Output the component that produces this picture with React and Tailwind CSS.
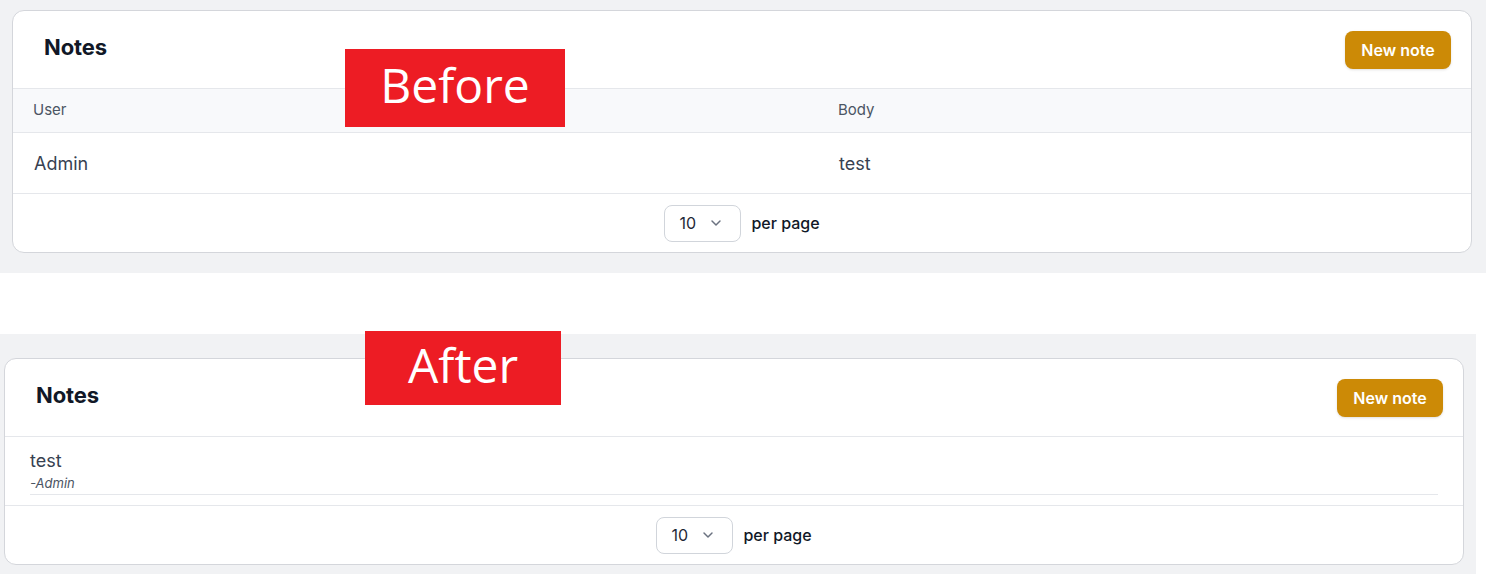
import { ChevronDown } from "lucide-react";

const font = { fontFamily: "Inter, 'Noto Sans', sans-serif" };

function Header() {
  return (
    <div className="flex h-[78px] items-center justify-between border-b border-[#e5e7eb] pl-[31px] pr-[20px]">
      <h2 className="mb-[4px] text-[22px] font-bold tracking-[-0.1px] text-[#111827]">Notes</h2>
      <button className="h-[38px] w-[106px] rounded-[8px] bg-[#cc8a06] text-[16px] font-semibold text-white shadow-sm">
        New note
      </button>
    </div>
  );
}

function Footer() {
  return (
    <div className="flex h-[58px] items-center justify-center gap-[10px]">
      <div className="flex h-[37px] w-[77px] items-center justify-between rounded-[8px] border border-[#d1d5db] pl-[14px] pr-[16px] text-[16px] text-[#1f2937]">
        <span>10</span>
        <ChevronDown className="h-[16px] w-[16px] text-[#6b7280]" strokeWidth={2.2} />
      </div>
      <span className="text-[16px] font-medium text-[#111827]">per page</span>
    </div>
  );
}

function Label({ text, className }) {
  return (
    <div
      className={`absolute flex items-center justify-center pb-[6px] bg-[#ed1c24] text-[48px] text-white ${className}`}
      style={{ fontFamily: "'Open Sans', 'Noto Sans', sans-serif" }}
    >
      {text}
    </div>
  );
}

export default function App() {
  return (
    <div className="relative h-[574px] w-[1486px] overflow-hidden bg-white" style={font}>
      {/* before */}
      <div className="bg-[#f1f2f4] pb-[20px] pl-[12px] pr-[14px] pt-[10px]">
        <div className="overflow-hidden rounded-[12px] border border-[#d4d6db] bg-white">
          <Header />
          <div className="grid h-[44px] grid-cols-[805px_1fr] items-center border-b border-[#e5e7eb] bg-[#f8f9fb] pl-[20px] text-[15px] text-[#4b5563]">
            <span>User</span>
            <span>Body</span>
          </div>
          <div className="grid h-[61px] grid-cols-[805px_1fr] items-center border-b border-[#e5e7eb] pl-[21px] text-[18px] text-[#374151]">
            <span>Admin</span>
            <span>test</span>
          </div>
          <Footer />
        </div>
      </div>

      {/* after */}
      <div className="mt-[61px] w-[1476px] bg-[#f1f2f4] pb-[10px] pl-[4px] pr-[12px] pt-[24px]">
        <div className="overflow-hidden rounded-[12px] border border-[#d4d6db] bg-white">
          <Header />
          <div className="border-b border-[#e5e7eb] px-[25px] pt-[12px] pb-[10px]">
            <div className="border-b border-[#e5e7eb]">
              <div className="text-[18px] leading-[24px] text-[#374151]">test</div>
              <div className="text-[13px] italic leading-[21px] text-[#4b5563]">-Admin</div>
            </div>
          </div>
          <Footer />
        </div>
      </div>

      <Label text="Before" className="left-[345px] top-[49px] h-[78px] w-[220px]" />
      <Label text="After" className="left-[365px] top-[331px] h-[74px] w-[196px]" />
    </div>
  );
}
